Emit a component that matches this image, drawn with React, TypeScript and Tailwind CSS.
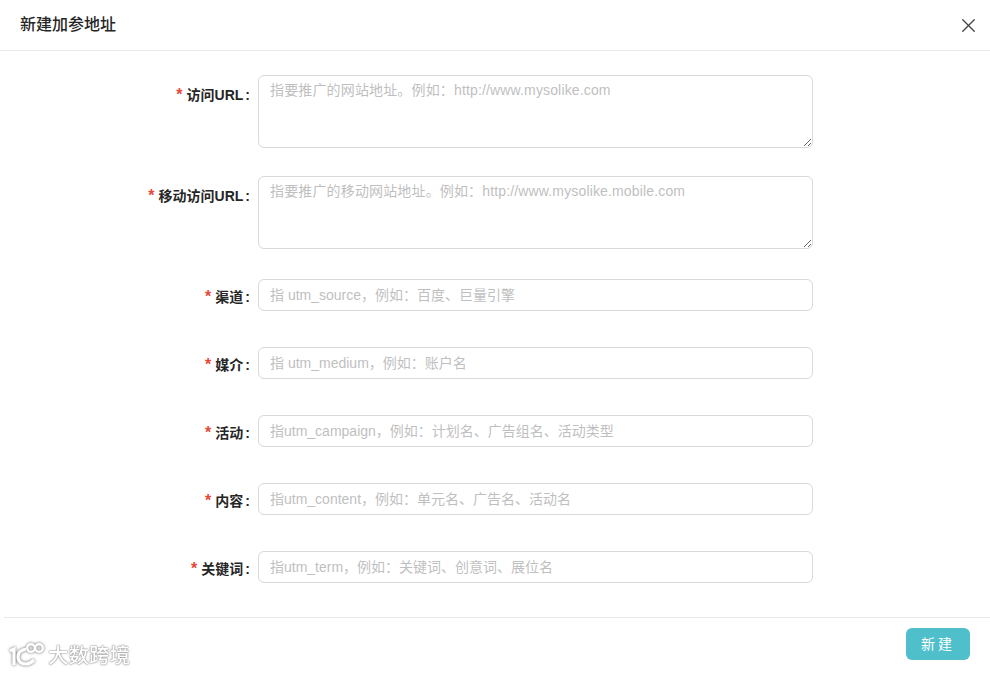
import { X } from 'lucide-react'

const fontStack = "font-['Liberation_Sans','Noto_Sans_CJK_SC',sans-serif]"

const fields = [
  { label: '访问URL', placeholder: '指要推广的网站地址。例如：http://www.mysolike.com', multi: true, gap: 'mb-7' },
  { label: '移动访问URL', placeholder: '指要推广的移动网站地址。例如：http://www.mysolike.mobile.com', multi: true, gap: 'mb-[30px]' },
  { label: '渠道', placeholder: '指 utm_source，例如：百度、巨量引擎', multi: false, gap: 'mb-9' },
  { label: '媒介', placeholder: '指 utm_medium，例如：账户名', multi: false, gap: 'mb-9' },
  { label: '活动', placeholder: '指utm_campaign，例如：计划名、广告组名、活动类型', multi: false, gap: 'mb-9' },
  { label: '内容', placeholder: '指utm_content，例如：单元名、广告名、活动名', multi: false, gap: 'mb-9' },
  { label: '关键词', placeholder: '指utm_term，例如：关键词、创意词、展位名', multi: false, gap: 'mb-0' },
]

const FormRow = ({ label, placeholder, multi, gap }: (typeof fields)[number]) => (
  <div className={`flex items-start ${gap}`}>
    <label className={`w-[250px] h-8 pt-1 flex items-center justify-end text-sm font-bold text-[#262626] ${multi ? 'mt-[2px]' : ''}`}>
      <span className="text-base leading-none text-[#e5483a] mr-[4px]">*</span>
      {label}
      <span className="ml-[2px]">:</span>
    </label>
    <div className="ml-2 w-[555px]">
      {multi ? (
        <textarea
          placeholder={placeholder}
          className="block w-full h-[73px] px-[11px] py-[3px] tracking-[0.15px] text-sm leading-[22px] border border-[#d9d9d9] rounded-md placeholder:text-[#bfbfbf] outline-none"
        />
      ) : (
        <input
          placeholder={placeholder}
          className="block w-full h-8 px-[11px] text-sm border border-[#d9d9d9] rounded-md placeholder:text-[#bfbfbf] outline-none"
        />
      )}
    </div>
  </div>
)

export default function App() {
  return (
    <div className={`${fontStack} w-[990px] h-[674px] bg-white flex flex-col overflow-hidden relative`}>
      {/* Header */}
      <div className="h-[51px] shrink-0 flex items-center justify-between pl-5 pr-[10px] border-b border-[#e8e8e8]">
        <h1 className="text-base font-medium text-[#262626]">新建加参地址</h1>
        <X className="w-[23px] h-[23px] text-[#444]" strokeWidth={1.4} />
      </div>

      {/* Form */}
      <div className="flex-1 pt-6">
        {fields.map((f) => (
          <FormRow key={f.label} {...f} />
        ))}
      </div>

      {/* Footer */}
      <div className="h-[57px] shrink-0 ml-1 border-t border-[#e8e8e8] flex justify-end pt-[10px] pr-5">
        <button className="w-16 h-8 rounded-md bg-[#4fbfcb] text-white text-sm tracking-[3px]">新建</button>
      </div>

      {/* Watermark */}
      <div className="absolute left-2 top-[641px] flex items-center text-white">
        <svg width="40" height="30" viewBox="0 0 40 30" fill="none" stroke="#fff" strokeWidth="3.2" className="blur-[0.3px] drop-shadow-[0_0_1.5px_#666]">
          <path d="M2 10l4-2v16" />
          <path d="M18 8c-5 1-8 4-8 8 0 5 4 7 8 7 3 0 6-2 8-4" />
          <circle cx="23" cy="7" r="3.8" strokeWidth="2.4" />
          <circle cx="31" cy="7" r="3.8" strokeWidth="2.4" />
        </svg>
        <span className="text-[20.5px] leading-6 font-medium blur-[0.3px] [text-shadow:0_0_2px_#777,0_0_1px_#888]">大数跨境</span>
      </div>
    </div>
  )
}
